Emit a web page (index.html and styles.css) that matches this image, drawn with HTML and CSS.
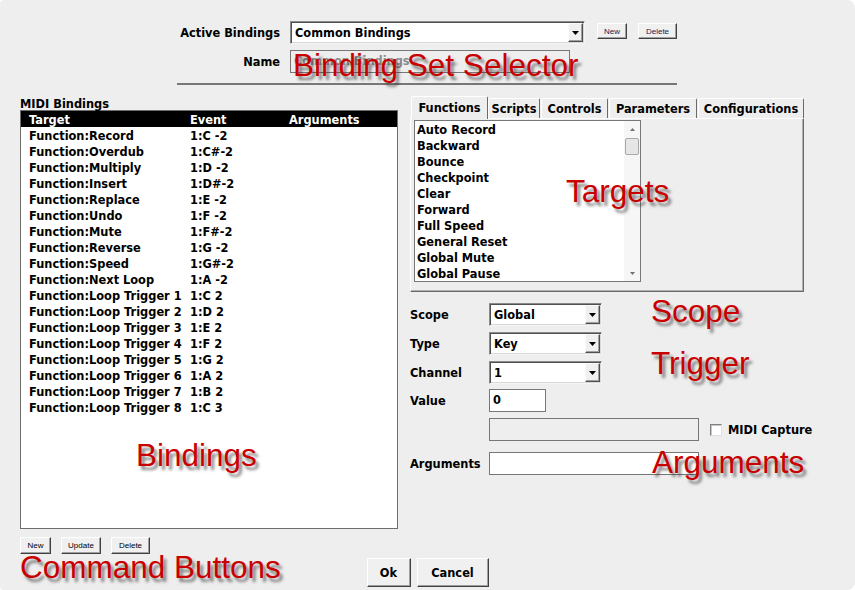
FILE: index.html
```html
<!DOCTYPE html>
<html>
<head>
<meta charset="utf-8">
<link rel="stylesheet" href="styles.css">
</head>
<body>
<div class="window">
  <div class="top">
    <div class="row">
      <div class="lbl-top">Active Bindings</div>
      <div class="select select-wide"><span class="val">Common Bindings</span><span class="drop"><svg width="7" height="4" viewBox="0 0 7 4"><path d="M0 0h7l-3.5 4z" fill="#000"/></svg></span></div>
      <button class="btn mini mini-new">New</button>
      <button class="btn mini mini-del">Delete</button>
    </div>
    <div class="row row2">
      <div class="lbl-top">Name</div>
      <div class="input input-name">Common Bindings</div>
    </div>
    <div class="rule"></div>
  </div>

  <div class="main">
    <div class="left">
      <div class="caption">MIDI Bindings</div>
      <div class="bindings">
        <div class="brow head"><span>Target</span><span>Event</span><span>Arguments</span></div>
        <div class="brow"><span>Function:Record</span><span>1:C -2</span><span></span></div>
        <div class="brow"><span>Function:Overdub</span><span>1:C#-2</span><span></span></div>
        <div class="brow"><span>Function:Multiply</span><span>1:D -2</span><span></span></div>
        <div class="brow"><span>Function:Insert</span><span>1:D#-2</span><span></span></div>
        <div class="brow"><span>Function:Replace</span><span>1:E -2</span><span></span></div>
        <div class="brow"><span>Function:Undo</span><span>1:F -2</span><span></span></div>
        <div class="brow"><span>Function:Mute</span><span>1:F#-2</span><span></span></div>
        <div class="brow"><span>Function:Reverse</span><span>1:G -2</span><span></span></div>
        <div class="brow"><span>Function:Speed</span><span>1:G#-2</span><span></span></div>
        <div class="brow"><span>Function:Next Loop</span><span>1:A -2</span><span></span></div>
        <div class="brow"><span>Function:Loop Trigger 1</span><span>1:C 2</span><span></span></div>
        <div class="brow"><span>Function:Loop Trigger 2</span><span>1:D 2</span><span></span></div>
        <div class="brow"><span>Function:Loop Trigger 3</span><span>1:E 2</span><span></span></div>
        <div class="brow"><span>Function:Loop Trigger 4</span><span>1:F 2</span><span></span></div>
        <div class="brow"><span>Function:Loop Trigger 5</span><span>1:G 2</span><span></span></div>
        <div class="brow"><span>Function:Loop Trigger 6</span><span>1:A 2</span><span></span></div>
        <div class="brow"><span>Function:Loop Trigger 7</span><span>1:B 2</span><span></span></div>
        <div class="brow"><span>Function:Loop Trigger 8</span><span>1:C 3</span><span></span></div>
      </div>
    </div>

    <div class="right">
      <div class="tabs">
        <div class="tab tab-functions selected">Functions</div>
        <div class="tab tab-scripts">Scripts</div>
        <div class="tab tab-controls">Controls</div>
        <div class="tab tab-parameters">Parameters</div>
        <div class="tab tab-configurations">Configurations</div>
      </div>
      <div class="panel">
        <div class="tlist">
          <div class="items">
            <div class="item">Auto Record</div>
            <div class="item">Backward</div>
            <div class="item">Bounce</div>
            <div class="item">Checkpoint</div>
            <div class="item">Clear</div>
            <div class="item">Forward</div>
            <div class="item">Full Speed</div>
            <div class="item">General Reset</div>
            <div class="item">Global Mute</div>
            <div class="item">Global Pause</div>
          </div>
          <div class="vscroll">
            <div class="sarrow"><svg width="5" height="3" viewBox="0 0 5 3"><path d="M2.5 0L5 3H0z" fill="#707070"/></svg></div>
            <div class="thumb"></div>
            <div class="track"></div>
            <div class="sarrow"><svg width="5" height="3" viewBox="0 0 5 3"><path d="M0 0h5L2.5 3z" fill="#707070"/></svg></div>
          </div>
        </div>
      </div>

      <div class="form">
        <div class="frow">
          <div class="flbl">Scope</div>
          <div class="select select-small"><span class="val">Global</span><span class="drop"><svg width="7" height="4" viewBox="0 0 7 4"><path d="M0 0h7l-3.5 4z" fill="#000"/></svg></span></div>
        </div>
        <div class="frow gap6">
          <div class="flbl">Type</div>
          <div class="select select-small"><span class="val">Key</span><span class="drop"><svg width="7" height="4" viewBox="0 0 7 4"><path d="M0 0h7l-3.5 4z" fill="#000"/></svg></span></div>
        </div>
        <div class="frow gap6">
          <div class="flbl">Channel</div>
          <div class="select select-small"><span class="val">1</span><span class="drop"><svg width="7" height="4" viewBox="0 0 7 4"><path d="M0 0h7l-3.5 4z" fill="#000"/></svg></span></div>
        </div>
        <div class="frow gap5">
          <div class="flbl">Value</div>
          <div class="input input-value">0</div>
        </div>
        <div class="frow gap6">
          <div class="flbl"></div>
          <div class="input input-long disabled"></div>
          <div class="check"></div>
          <div class="check-lbl">MIDI Capture</div>
        </div>
        <div class="frow gap11">
          <div class="flbl">Arguments</div>
          <div class="input input-long"></div>
        </div>
      </div>
    </div>
  </div>

  <div class="cmds">
    <button class="btn cmd cmd-new">New</button>
    <button class="btn cmd cmd-update">Update</button>
    <button class="btn cmd cmd-delete">Delete</button>
  </div>

  <div class="footer">
    <button class="btn big big-ok">Ok</button>
    <button class="btn big big-cancel">Cancel</button>
  </div>

  <div class="note n-selector">Binding Set Selector</div>
  <div class="note n-targets">Targets</div>
  <div class="note n-scope">Scope</div>
  <div class="note n-trigger">Trigger</div>
  <div class="note n-bindings">Bindings</div>
  <div class="note n-arguments">Arguments</div>
  <div class="note n-commands">Command Buttons</div>
</div>
</body>
</html>
```
FILE: styles.css
```css
* { box-sizing: border-box; }
html, body { margin: 0; padding: 0; background: #ffffff; }
body {
  font-family: "DejaVu Sans", sans-serif;
  font-weight: bold;
  font-size: 11.4px;
  color: #000;
}
.window {
  position: relative;
  width: 855px;
  height: 590px;
  background: #eeeeee;
  border-radius: 4px 8px 8px 4px;
  overflow: hidden;
}

/* top area */
.top { padding-top: 21px; }
.row { display: flex; align-items: flex-start; height: 23px; }
.row2 { margin-top: 6px; }
.lbl-top { width: 280px; flex-shrink: 0; text-align: right; line-height: 23px; padding-top: 1px; }
.rule { margin: 10px 0 0 177px; width: 500px; height: 2px; background: #777777; }

/* select */
.select {
  display: flex;
  flex-shrink: 0;
  height: 23px;
  background: #fff;
  border: 1px solid;
  border-color: #8a8a8a #f4f4f4 #f4f4f4 #8a8a8a;
  box-shadow: inset 1px 1px 0 #505050, inset -1px -1px 0 #d8d8d8;
  padding: 1px;
}
.select .val { flex: 1; line-height: 19px; padding-left: 3px; padding-top: 1px; }
.select .drop {
  width: 15px;
  height: 19px;
  background: #f0f0f0;
  border: 1px solid;
  border-color: #fafafa #505050 #505050 #fafafa;
  box-shadow: inset -1px -1px 0 #a0a0a0;
  display: flex;
  align-items: center;
  justify-content: center;
}
.select-wide { margin-left: 10px; width: 295px; }
.select-small { width: 113px; }

/* inputs */
.input {
  flex-shrink: 0;
  height: 23px;
  border: 1px solid #777;
  background: #fff;
  line-height: 21px;
  padding-left: 3px;
}
.input-name {
  margin-left: 10px;
  width: 280px;
  background: #eeeeee;
  color: #8c8c8c;
}
.input-value { width: 57px; height: 23px; }
.input-long { width: 210px; }
.input.disabled { background: #eeeeee; }

/* buttons */
.btn {
  font-family: "Liberation Sans", sans-serif;
  font-weight: normal;
  background: #f0f0f0;
  border: 1px solid;
  border-color: #ffffff #404040 #404040 #ffffff;
  box-shadow: inset -1px -1px 0 #a0a0a0;
  padding: 0;
  margin: 0;
  color: #000;
  flex-shrink: 0;
}
.mini { height: 16px; font-size: 8px; margin-top: 2px; color: #1c2050; }
.mini-new { margin-left: 12px; width: 30px; }
.mini-del { margin-left: 11px; width: 39px; }

/* main */
.main { display: flex; margin-top: 11px; padding-left: 20px; gap: 12px; }
.left { width: 378px; flex-shrink: 0; }
.caption { height: 14px; line-height: 14px; padding-top: 1px; }
.bindings {
  height: 419px;
  background: #fff;
  border: 1px solid #6e6e6e;
}
.brow {
  display: grid;
  grid-template-columns: 161px 99px 1fr;
  padding-left: 8px;
  padding-top: 1px;
  height: 16px;
  line-height: 16px;
  white-space: pre;
}
.brow.head { background: #000; color: #fff; }

.right { width: 394px; flex-shrink: 0; }
.tabs { display: flex; align-items: flex-end; height: 22px; }
.tab {
  flex-shrink: 0;
  height: 20px;
  line-height: 19px;
  padding-top: 1px;
  border: 1px solid;
  border-bottom: none;
  border-color: #ffffff #6a6a6a transparent #ffffff;
  border-radius: 2px 2px 0 0;
  text-align: center;
  background: #eeeeee;
}
.tab.selected {
  position: relative;
  z-index: 1;
  height: 23px;
  margin-bottom: -1px;
  line-height: 20px;
}
.tab-functions { margin-left: 1px; width: 77px; }
.tab-scripts { width: 52px; }
.tab-controls { margin-left: 1px; width: 67px; }
.tab-parameters { margin-left: 1px; width: 88px; }
.tab-configurations { margin-left: 1px; width: 106px; }

.panel {
  height: 174px;
  border: 1px solid;
  border-color: #ffffff #6a6a6a #6a6a6a #ffffff;
  box-shadow: inset -1px -1px 0 #b0b0b0;
  padding: 1px 3px;
}
.tlist {
  display: flex;
  width: 227px;
  height: 162px;
  background: #fff;
  border: 1px solid #777;
}
.items { flex: 1; padding-left: 2px; }
.item { height: 16px; line-height: 16px; padding-top: 1px; }
.vscroll {
  width: 16px;
  display: flex;
  flex-direction: column;
  background: #f6f6f6;
}
.sarrow { height: 16px; display: flex; align-items: center; justify-content: center; }
.thumb {
  margin: 1px 1px 0 1px;
  height: 17px;
  background: #e6e6e6;
  border: 1px solid #a8a8a8;
  border-radius: 2px;
}
.track { flex: 1; }

.form { margin-top: 11px; }
.frow { display: flex; align-items: center; height: 23px; }
.gap5 { margin-top: 5px; }
.gap6 { margin-top: 6px; }
.gap11 { margin-top: 11px; }
.flbl { width: 79px; flex-shrink: 0; }
.check {
  flex-shrink: 0;
  margin-left: 11px;
  width: 12px;
  height: 12px;
  background: #fff;
  border: 1px solid;
  border-color: #808080 #e0e0e0 #e0e0e0 #808080;
  box-shadow: inset 1px 1px 0 #c8c8c8;
}
.check-lbl { margin-left: 6px; white-space: nowrap; flex-shrink: 0; }

/* commands */
.cmds { display: flex; gap: 10px; padding-left: 20px; margin-top: 8px; }
.cmd { height: 17px; font-size: 8px; }
.cmd-new { width: 31px; }
.cmd-update { width: 40px; }
.cmd-delete { width: 39px; }

.footer { display: flex; justify-content: center; gap: 6px; margin-top: 4px; }
.big {
  height: 29px;
  font-family: "DejaVu Sans", sans-serif;
  font-weight: bold;
  font-size: 11.4px;
}
.big-ok { width: 44px; }
.big-cancel { width: 72px; }

/* annotations */
.note {
  position: absolute;
  font-family: "Liberation Sans", Arial, sans-serif;
  font-weight: normal;
  font-size: 31.5px;
  line-height: 24px;
  color: #c80000;
  white-space: nowrap;
  text-shadow: 3px 4px 3px rgba(50, 50, 50, 0.6);
}
.n-selector { left: 293px; top: 53px; }
.n-targets { left: 566px; top: 179px; }
.n-scope { left: 651px; top: 299px; }
.n-trigger { left: 651px; top: 351px; }
.n-arguments { left: 652px; top: 450px; }
.n-bindings { left: 136px; top: 443px; }
.n-commands { left: 20px; top: 555px; }
```
